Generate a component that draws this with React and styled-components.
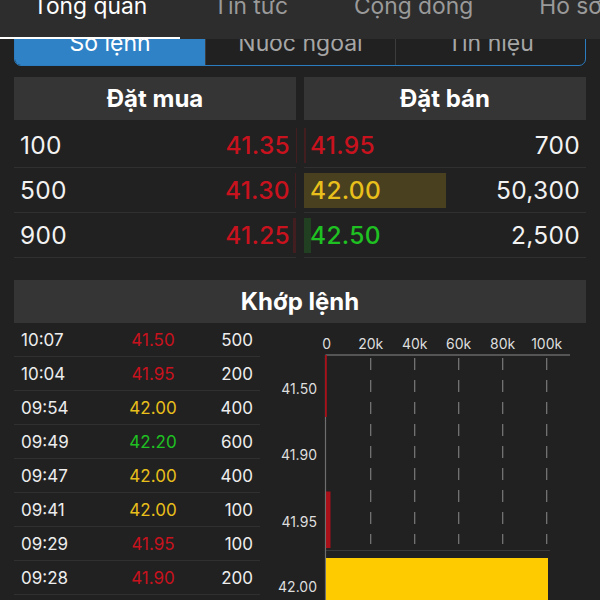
import styled, { createGlobalStyle } from "styled-components";

const RED = "#c8121e";
const YELLOW = "#e8bf1b";
const GREEN = "#1fc022";
const MAX_VOL = 100000;

const tabs = ["Tổng quan", "Tin tức", "Cộng đồng", "Hồ sơ"];
const segments = ["Sổ lệnh", "Nước ngoài", "Tín hiệu"];

const bids = [
  { vol: "100", v: 100, price: "41.35", color: RED },
  { vol: "500", v: 500, price: "41.30", color: RED },
  { vol: "900", v: 900, price: "41.25", color: RED },
];

const asks = [
  { price: "41.95", color: RED, vol: "700", v: 700 },
  { price: "42.00", color: YELLOW, vol: "50,300", v: 50300 },
  { price: "42.50", color: GREEN, vol: "2,500", v: 2500 },
];

const matches = [
  { time: "10:07", price: "41.50", color: RED, vol: "500" },
  { time: "10:04", price: "41.95", color: RED, vol: "200" },
  { time: "09:54", price: "42.00", color: YELLOW, vol: "400" },
  { time: "09:49", price: "42.20", color: GREEN, vol: "600" },
  { time: "09:47", price: "42.00", color: YELLOW, vol: "400" },
  { time: "09:41", price: "42.00", color: YELLOW, vol: "100" },
  { time: "09:29", price: "41.95", color: RED, vol: "100" },
  { time: "09:28", price: "41.90", color: RED, vol: "200" },
];

const GlobalStyle = createGlobalStyle`
  html, body {
    margin: 0;
    background: #212121;
  }
  body {
    font-family: Inter, "Liberation Sans", sans-serif;
  }
`;

export default function App() {
  return (
    <>
      <GlobalStyle />
      <Screen>
        <TabBar>
          {tabs.map((t, i) => (
            <Tab key={t} $active={i === 0}>
              <TabLabel>{t}</TabLabel>
            </Tab>
          ))}
        </TabBar>

        <Segmented>
          {segments.map((s, i) => (
            <Segment key={s} $active={i === 0}>
              {s}
            </Segment>
          ))}
        </Segmented>

        <OrderBook>
          <BookColumn>
            <BookHeader>Đặt mua</BookHeader>
            {bids.map((b) => (
              <BookRow key={b.price}>
                <Bar $side="left" $color={b.color} style={{ width: `${(b.v / MAX_VOL) * 100}%` }} />
                <Cell>{b.vol}</Cell>
                <Cell $color={b.color}>{b.price}</Cell>
              </BookRow>
            ))}
          </BookColumn>
          <BookColumn>
            <BookHeader>Đặt bán</BookHeader>
            {asks.map((a) => (
              <BookRow key={a.price}>
                <Bar $side="right" $color={a.color} style={{ width: `${(a.v / MAX_VOL) * 100}%` }} />
                <Cell $color={a.color}>{a.price}</Cell>
                <Cell>{a.vol}</Cell>
              </BookRow>
            ))}
          </BookColumn>
        </OrderBook>

        <SectionHeader>Khớp lệnh</SectionHeader>

        <MatchArea>
          <MatchTable>
            {matches.map((m) => (
              <MatchRow key={m.time}>
                <Time>{m.time}</Time>
                <MatchPrice $color={m.color}>{m.price}</MatchPrice>
                <MatchVol>{m.vol}</MatchVol>
              </MatchRow>
            ))}
          </MatchTable>
          <VolumeChart />
        </MatchArea>
      </Screen>
    </>
  );
}

function VolumeChart() {
  const x0 = 65.5;
  const ticks = ["0", "20k", "40k", "60k", "80k", "100k"];
  const levels = [
    { label: "41.50", y: 66 },
    { label: "41.90", y: 132 },
    { label: "41.95", y: 199 },
    { label: "42.00", y: 264 },
  ];
  return (
    <ChartSvg width="326" height="280" viewBox="0 0 326 280">
      {ticks.map((t, i) => (
        <text key={t} x={66.7 + i * 44} y="26" textAnchor="middle" fontSize="14" fill="#dedede">
          {t}
        </text>
      ))}
      {ticks.slice(1).map((t, i) => (
        <line
          key={t}
          x1={110.7 + i * 44}
          x2={110.7 + i * 44}
          y1="35"
          y2="221"
          stroke="#7a7a7a"
          strokeWidth="1.2"
          strokeDasharray="12 10"
        />
      ))}
      <line x1={x0} x2="290" y1="227.5" y2="227.5" stroke="#3a3a3a" strokeWidth="1" />
      <line x1={x0} x2="310" y1="32" y2="32" stroke="#8a8a8a" strokeWidth="1.2" />
      <line x1={x0} x2={x0} y1="32" y2="280" stroke="#6e6e6e" strokeWidth="1.2" />
      <rect x="65" y="32" width="1.8" height="62" fill="#a8101a" />
      <rect x="66" y="168.5" width="4.5" height="56.5" fill="#a8101a" />
      <rect x="66" y="235" width="222" height="45" fill="#fecb00" />
      {levels.map((l) => (
        <text key={l.label} x="57" y={l.y + 5} textAnchor="end" fontSize="14" fill="#dedede">
          {l.label}
        </text>
      ))}
    </ChartSvg>
  );
}

const Screen = styled.div`
  width: 600px;
  height: 600px;
  overflow: hidden;
  background: #212121;
  color: #f2f2f2;
`;

const TabBar = styled.nav`
  position: relative;
  z-index: 2;
  display: flex;
  height: 39px;
  background: #2d2d2d;
  overflow: hidden;
`;

const Tab = styled.div`
  flex: none;
  box-sizing: border-box;
  height: 39px;
  padding: 0 33px;
  border-bottom: 2px solid ${(p) => (p.$active ? "#ffffff" : "transparent")};
  color: ${(p) => (p.$active ? "#ffffff" : "#9a9a9a")};
  font-size: 22.8px;
  line-height: 26px;
  white-space: nowrap;
`;

const TabLabel = styled.span`
  display: block;
  margin-top: -7px;
`;

const Segmented = styled.div`
  box-sizing: border-box;
  display: grid;
  grid-template-columns: repeat(3, 1fr);
  height: 46px;
  margin: -19px 14px 0;
  border: 1px solid #2b7cc0;
  border-radius: 0 0 7px 7px;
  overflow: hidden;
`;

const Segment = styled.div`
  display: flex;
  align-items: center;
  justify-content: center;
  font-size: 23px;
  color: ${(p) => (p.$active ? "#ffffff" : "#a6a6a6")};
  background: ${(p) => (p.$active ? "#2f82c6" : "transparent")};
  & + & {
    border-left: 1px solid #3c3c3c;
  }
`;

const OrderBook = styled.div`
  display: grid;
  grid-template-columns: 1fr 1fr;
  column-gap: 8px;
  margin: 11px 14px 0;
`;

const BookColumn = styled.div`
  display: flex;
  flex-direction: column;
`;

const BookHeader = styled.div`
  display: flex;
  align-items: center;
  justify-content: center;
  height: 43px;
  margin-bottom: 3px;
  background: #353535;
  font-size: 24px;
  font-weight: 700;
  color: #fff;
`;

const BookRow = styled.div`
  position: relative;
  display: flex;
  align-items: center;
  justify-content: space-between;
  height: 44px;
  padding: 0 6px;
  border-bottom: 1px solid #303030;
  font-size: 24.5px;
  letter-spacing: 0.3px;
`;

const Bar = styled.div`
  position: absolute;
  top: 5px;
  bottom: 4px;
  ${(p) => (p.$side === "left" ? "right: 0;" : "left: 0;")}
  background: ${(p) => p.$color};
  opacity: 0.2;
`;

const Cell = styled.span`
  position: relative;
  color: ${(p) => p.$color || "#f2f2f2"};
  font-weight: ${(p) => (p.$color ? 500 : 400)};
`;

const SectionHeader = styled.div`
  display: flex;
  align-items: center;
  justify-content: center;
  height: 43px;
  margin: 22px 14px 0;
  background: #353535;
  font-size: 24px;
  font-weight: 700;
  color: #fff;
`;

const MatchArea = styled.div`
  display: grid;
  grid-template-columns: 246px 1fr;
  margin: 0 14px;
`;

const MatchTable = styled.div`
  display: flex;
  flex-direction: column;
`;

const MatchRow = styled.div`
  display: grid;
  grid-template-columns: 100px 78px 1fr;
  align-items: center;
  height: 33px;
  border-bottom: 1px solid #303030;
  font-size: 17px;
`;

const Time = styled.span`
  padding-left: 7px;
  color: #ededed;
`;

const MatchPrice = styled.span`
  text-align: center;
  color: ${(p) => p.$color};
`;

const MatchVol = styled.span`
  padding-right: 7px;
  text-align: right;
  color: #ededed;
`;

const ChartSvg = styled.svg`
  display: block;
  font-family: Inter, "Liberation Sans", sans-serif;
`;
